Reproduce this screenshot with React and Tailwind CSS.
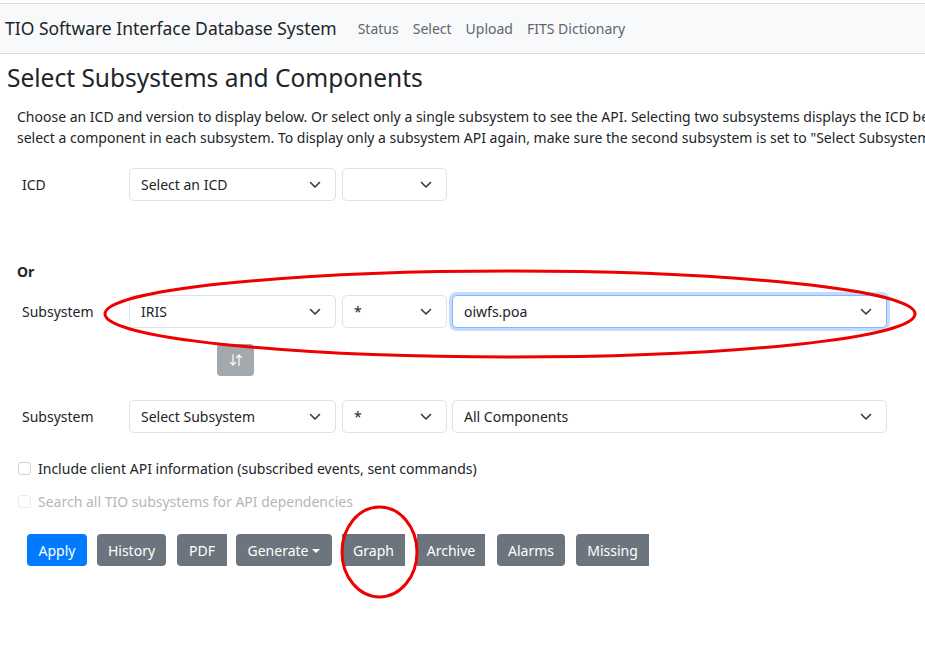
import { useState } from 'react';

function Chevron() {
  return (
    <svg width="12" height="8" viewBox="0 0 12 8" className="shrink-0">
      <path d="M1.5 1.5 L6 6 L10.5 1.5" fill="none" stroke="#343a40" strokeWidth="1.6" strokeLinecap="round" strokeLinejoin="round" />
    </svg>
  );
}

function Select({ value, width, focused }) {
  return (
    <div
      className={`h-[33px] ${width} flex items-center justify-between pl-[11px] pr-[14px] rounded-[5px] border bg-white text-[14px] text-[#212529] ${
        focused ? 'border-[#86b7fe] shadow-[0_0_0_3px_rgba(13,110,253,0.25)]' : 'border-[#dee2e6]'
      }`}
    >
      <span>{value}</span>
      <Chevron />
    </div>
  );
}

function Row({ label, values, focusLast }) {
  return (
    <div className="flex items-center">
      <div className="w-[129px] pl-[22px] text-[14px] text-[#212529]">{label}</div>
      <Select value={values[0]} width="w-[207px]" />
      <div className="ml-[6px]">
        <Select value={values[1]} width="w-[105px]" />
      </div>
      {values.length > 2 && (
        <div className="ml-[5px]">
          <Select value={values[2]} width="w-[435px]" focused={focusLast} />
        </div>
      )}
    </div>
  );
}

function Check({ label, disabled }) {
  return (
    <label className={`flex items-center h-[21px] pl-[18px] text-[14px] ${disabled ? 'text-[#b3b7bb]' : 'text-[#212529]'}`}>
      <span className={`w-[13px] h-[13px] rounded-[3px] border bg-white ${disabled ? 'border-[#e9ecef]' : 'border-[#ced4da]'}`} />
      <span className="ml-[7px]">{label}</span>
    </label>
  );
}

const buttons = [
  { t: 'Apply', w: 'w-[60px]', ml: 'ml-[27px]', c: 'bg-[#007bff] rounded-[4px]' },
  { t: 'History', w: 'w-[69px]', ml: 'ml-[10px]', c: 'bg-[#6c757d] rounded-[4px]' },
  { t: 'PDF', w: 'w-[50px]', ml: 'ml-[11px]', c: 'bg-[#6c757d] rounded-l-[4px]' },
  { t: 'Generate', w: 'w-[96px]', ml: 'ml-[9px]', c: 'bg-[#6c757d] rounded-[4px]', caret: true },
  { t: 'Graph', w: 'w-[63px]', ml: 'ml-[10px]', c: 'bg-[#6c757d]' },
  { t: 'Archive', w: 'w-[68px]', ml: 'ml-[12px]', c: 'bg-[#6c757d]' },
  { t: 'Alarms', w: 'w-[68px]', ml: 'ml-[12px]', c: 'bg-[#6c757d] rounded-[4px]' },
  { t: 'Missing', w: 'w-[73px]', ml: 'ml-[11px]', c: 'bg-[#6c757d] rounded-l-[4px]' },
];

export default function App() {
  const [nav] = useState(['Status', 'Select', 'Upload', 'FITS Dictionary']);

  return (
    <div className="relative w-[925px] h-[661px] overflow-hidden bg-white font-['Noto_Sans',sans-serif]">
      {/* Navbar */}
      <div className="pt-[3px]">
        <div className="h-[51px] bg-[#f8f9fa] border-t border-b border-[#dadde0] flex items-center">
          <span className="pl-[5px] text-[17.5px] text-[#212529]">TIO Software Interface Database System</span>
          <div className="flex ml-[21px] gap-[14px] text-[14px] text-[#5f666d]">
            {nav.map((n) => (
              <span key={n}>{n}</span>
            ))}
          </div>
        </div>
      </div>

      <h1 className="mt-[9px] pl-[7px] text-[24.5px] leading-[30px] text-[#212529]">Select Subsystems and Components</h1>

      <div className="w-[925px] overflow-hidden">
        <p className="mt-[13px] pl-[17px] text-[14px] leading-[21px] text-[#212529] whitespace-nowrap">
          Choose an ICD and version to display below. Or select only a single subsystem to see the API. Selecting two subsystems displays the ICD between them.
          <br />
          select a component in each subsystem. To display only a subsystem API again, make sure the second subsystem is set to "Select Subsystem".
        </p>
      </div>

      <div className="mt-[20px]">
        <Row label="ICD" values={['Select an ICD', '']} />
      </div>

      <div className="mt-[60px] pl-[17px] text-[14px] leading-[21px] font-bold text-[#212529]">Or</div>

      <div className="mt-[13px]">
        <Row label="Subsystem" values={['IRIS', '*', 'oiwfs.poa']} focusLast />
      </div>

      <div className="mt-[16px] ml-[217px] w-[37px] h-[32px] rounded-[4px] bg-[#a3a8ac] flex items-center justify-center">
        <svg width="16" height="16" viewBox="0 0 16 16">
          <path d="M5 2.5 V13 M2.5 10.5 L5 13 L7.5 10.5" fill="none" stroke="white" strokeWidth="1.2" strokeLinecap="round" strokeLinejoin="round" />
          <path d="M11 13.5 V3 M8.5 5.5 L11 3 L13.5 5.5" fill="none" stroke="white" strokeWidth="1.2" strokeLinecap="round" strokeLinejoin="round" />
        </svg>
      </div>

      <div className="mt-[24px]">
        <Row label="Subsystem" values={['Select Subsystem', '*', 'All Components']} />
      </div>

      <div className="mt-[25px]">
        <Check label="Include client API information (subscribed events, sent commands)" />
      </div>
      <div className="mt-[12px]">
        <Check label="Search all TIO subsystems for API dependencies" disabled />
      </div>

      <div className="mt-[22px] flex">
        {buttons.map((b) => (
          <div
            key={b.t}
            className={`${b.w} ${b.ml} ${b.c} h-[32px] flex items-center justify-center text-[14px] text-white`}
          >
            {b.t}
            {b.caret && (
              <span className="ml-[4px] mt-[1px] w-0 h-0 border-l-[4px] border-r-[4px] border-t-[4px] border-l-transparent border-r-transparent border-t-white" />
            )}
          </div>
        ))}
      </div>

      {/* red annotations */}
      <svg className="absolute inset-0 pointer-events-none" width="925" height="661">
        <ellipse cx="510" cy="314" rx="405" ry="43" fill="none" stroke="#ee0000" strokeWidth="3" />
        <ellipse cx="379.5" cy="552" rx="37.5" ry="45" fill="none" stroke="#ee0000" strokeWidth="3" />
      </svg>
    </div>
  );
}
